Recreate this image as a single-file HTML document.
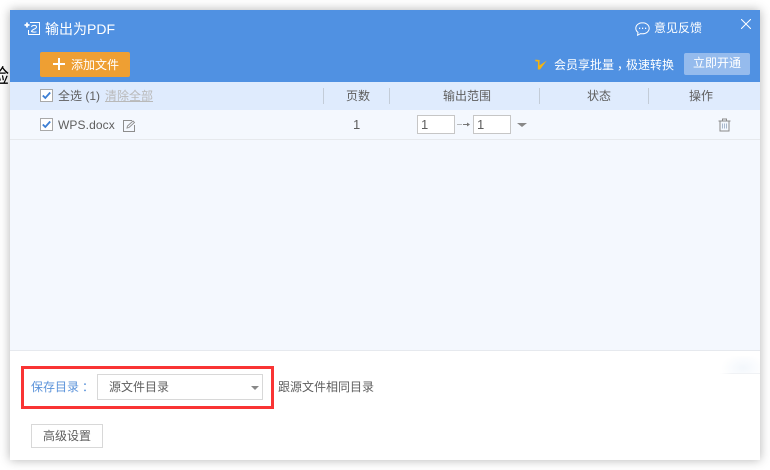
<!DOCTYPE html>
<html><head><meta charset="utf-8">
<style>
html,body{margin:0;padding:0;}
body{width:770px;height:470px;overflow:hidden;background:#fff;position:relative;font-family:"Liberation Sans","Noto Sans CJK SC",sans-serif;font-size:12px;color:#5e5e5e;}
.a{position:absolute;white-space:nowrap;line-height:16px;}
.sep{position:absolute;top:88px;width:1px;height:16px;background:#c3ccd8;}
.cb{position:absolute;width:11px;height:11px;border:1px solid #a9a9a9;background:#fff;}
.inp{position:absolute;top:115px;width:33px;height:17px;border:1px solid #c6c6c6;background:#fff;line-height:17px;padding-left:3px;color:#5e5e5e;font-size:13px;}
.sh{position:relative;left:3px;}
</style></head>
<body>
<div class="a" style="left:-11px;top:66px;font-size:20px;line-height:22px;color:#000;">验</div>
<div style="position:absolute;left:10px;top:10px;width:750px;height:450px;background:#fff;box-shadow:0 0 10px rgba(0,0,0,.3);"></div>
<div style="position:absolute;left:10px;top:10px;width:750px;height:72px;background:#5091e2;"></div>
<div style="position:absolute;left:10px;top:82px;width:750px;height:28px;background:#dfebfd;"></div>
<div style="position:absolute;left:10px;top:110px;width:750px;height:240px;background:#f4f8fe;"></div>
<div style="position:absolute;left:10px;top:139px;width:750px;height:1px;background:#e6e9ed;"></div>
<div style="position:absolute;left:10px;top:350px;width:750px;height:1px;background:#e6e9ee;"></div>
<div style="position:absolute;left:715px;top:356px;width:45px;height:17px;background:radial-gradient(ellipse 22px 14px at 28px 12px,#f3f7fc,#fff);"></div>
<div style="position:absolute;left:720px;top:373px;width:40px;height:1px;background:linear-gradient(to right,#fff,#f0f2f5 30%);"></div>

<svg style="position:absolute;left:24px;top:21px" width="17" height="15" viewBox="0 0 17 15" fill="none" stroke="#fff" stroke-width="1">
<path d="M6 1.5H15.5V13.5H4.5V9"/><path d="M.5 4H5.5M3 1.5V6.5" stroke-width="1.8"/><path d="M7.5 6C8 3.8 12.5 3.8 12.5 6C12.5 8.2 8 8 7.5 10.5C9 11.2 11 11.2 12.5 10.8"/>
</svg>
<div class="a" style="left:45px;top:20px;font-size:14px;line-height:18px;color:#fff;">输出为PDF</div>

<svg style="position:absolute;left:635px;top:22px" width="15" height="14" viewBox="0 0 15 14" fill="none" stroke="#fff" stroke-width="1">
<path d="M7.5 .8C3.8 .8 .8 3.2 .8 6.3C.8 8 1.6 9.4 3 10.4L2.6 13.2L5.6 11.6C6.2 11.7 6.9 11.8 7.5 11.8C11.2 11.8 14.2 9.4 14.2 6.3C14.2 3.2 11.2 .8 7.5 .8Z"/>
<path d="M4 6.3H5.2M7 6.3H8.2M10 6.3H11.2" stroke-width="1.4"/>
</svg>
<div class="a" style="left:654px;top:20px;color:#fff;">意见反馈</div>
<svg style="position:absolute;left:741px;top:19px" width="10" height="10" viewBox="0 0 10 10" stroke="#fff" stroke-width="1" fill="none"><path d="M0 0L10 10M10 0L0 10"/></svg>

<div style="position:absolute;left:40px;top:52px;width:90px;height:25px;background:#ee9f33;border-radius:2px;"></div>
<svg style="position:absolute;left:53px;top:58px" width="12" height="12" viewBox="0 0 12 12"><path d="M6 0V12M0 6H12" stroke="#fff" stroke-width="2"/></svg>
<div class="a" style="left:71px;top:57px;color:#fff;">添加文件</div>

<svg style="position:absolute;left:535px;top:59px" width="12" height="11" viewBox="0 0 12 11"><path d="M.3 .6L4.6 1L4.4 6.5L11.7 1.6L5 10.5H2.8L3 2.6L.3 2.2Z" fill="#f6b40d"/></svg>
<div class="a" style="left:554px;top:57px;color:#fff;">会员享批量<span class="sh">，</span>极速转换</div>
<div style="position:absolute;left:684px;top:53px;width:66px;height:22px;background:#95bbed;border-radius:2px;color:#fff;text-align:center;line-height:21px;">立即开通</div>

<div class="cb" style="left:40px;top:89px;"></div>
<svg style="position:absolute;left:42px;top:91px" width="9" height="9" viewBox="0 0 9 9" fill="none"><path d="M.8 4.5L3.3 7L8.2 1.5" stroke="#3d7fd4" stroke-width="1.8"/></svg>
<div class="a" style="left:58px;top:88px;">全选 (1)</div>
<div class="a" style="left:105px;top:88px;color:#b9b9b9;text-decoration:underline;">清除全部</div>
<div class="sep" style="left:323px;"></div>
<div class="a" style="left:346px;top:88px;">页数</div>
<div class="sep" style="left:389px;"></div>
<div class="a" style="left:443px;top:88px;">输出范围</div>
<div class="sep" style="left:539px;"></div>
<div class="a" style="left:587px;top:88px;">状态</div>
<div class="sep" style="left:648px;"></div>
<div class="a" style="left:689px;top:88px;">操作</div>

<div class="cb" style="left:40px;top:118px;"></div>
<svg style="position:absolute;left:42px;top:120px" width="9" height="9" viewBox="0 0 9 9" fill="none"><path d="M.8 4.5L3.3 7L8.2 1.5" stroke="#3d7fd4" stroke-width="1.8"/></svg>
<div class="a" style="left:58px;top:117px;font-size:12px;letter-spacing:.1px;">WPS.docx</div>
<svg style="position:absolute;left:123px;top:120px" width="13" height="12" viewBox="0 0 13 12" fill="none" stroke="#8d8d8d"><path d="M9 .5H.5V11.5H11.5V5"/><path d="M4 8L4.5 6L10 1L11.5 2.5L6 7.5Z" stroke-width=".9"/></svg>
<div class="a" style="left:353px;top:117px;font-size:13px;">1</div>
<div class="inp" style="left:417px;">1</div>
<svg style="position:absolute;left:457px;top:120px" width="14" height="9" viewBox="0 0 14 9" fill="none" stroke="#777"><path d="M.5 4.5H5" stroke-dasharray="1 1"/><path d="M6 4.5H12"/><path d="M10 2.5L13 4.5L10 6.5Z" fill="#777" stroke="none"/></svg>
<div class="inp" style="left:473px;">1</div>
<div style="position:absolute;left:517px;top:123px;width:0;height:0;border-left:5px solid transparent;border-right:5px solid transparent;border-top:4px solid #888;"></div>
<svg style="position:absolute;left:718px;top:118px" width="13" height="14" viewBox="0 0 13 14" fill="none" stroke="#8a8a8a"><path d="M.5 3H12.5M4.5 3V1H8.5V3"/><path d="M2 3V13H11V3"/><path d="M4.5 5.5V10.5M6.5 5.5V10.5M8.5 5.5V10.5" stroke="#a9b8cc"/></svg>

<div style="position:absolute;left:21px;top:366px;width:253px;height:43px;border:3px solid #f93434;box-sizing:border-box;"></div>
<div class="a" style="left:31px;top:379px;color:#5b93da;">保存目录<span class="sh">：</span></div>
<div style="position:absolute;left:97px;top:374px;width:166px;height:26px;border:1px solid #d8d8d8;box-sizing:border-box;background:#fff;"></div>
<div class="a" style="left:109px;top:379px;">源文件目录</div>
<div style="position:absolute;left:251px;top:386px;width:0;height:0;border-left:4px solid transparent;border-right:4px solid transparent;border-top:4px solid #888;"></div>
<div class="a" style="left:278px;top:379px;">跟源文件相同目录</div>
<div style="position:absolute;left:31px;top:424px;width:72px;height:24px;border:1px solid #d8d8d8;box-sizing:border-box;background:#fff;text-align:center;line-height:22px;">高级设置</div>
</body></html>
